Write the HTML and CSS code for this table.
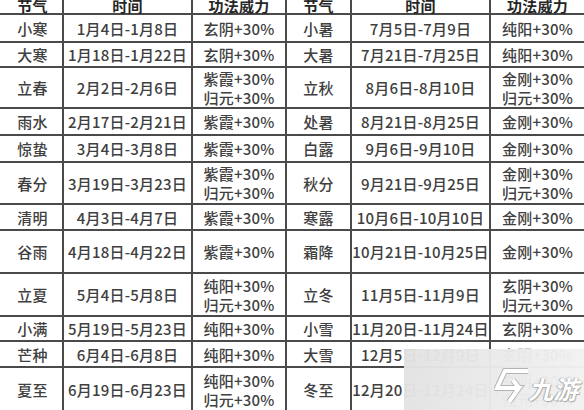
FILE: index.html
```html
<!DOCTYPE html>
<html lang="zh-CN">
<head>
<meta charset="utf-8">
<title>节气功法威力</title>
<link rel="stylesheet" href="styles.css">
</head>
<body>
<div class="page">
  <div class="table">
    <div class="c h first">节气</div><div class="c h">时间</div><div class="c h">功法威力</div><div class="c h">节气</div><div class="c h">时间</div><div class="c h">功法威力</div>

    <div class="c first">小寒</div><div class="c">1月4日-1月8日</div><div class="c">玄阴+30%</div><div class="c">小暑</div><div class="c">7月5日-7月9日</div><div class="c">纯阳+30%</div>

    <div class="c first">大寒</div><div class="c">1月18日-1月22日</div><div class="c">玄阴+30%</div><div class="c">大暑</div><div class="c">7月21日-7月25日</div><div class="c">纯阳+30%</div>

    <div class="c first">立春</div><div class="c">2月2日-2月6日</div><div class="c"><span>紫霞+30%</span><span>归元+30%</span></div><div class="c">立秋</div><div class="c">8月6日-8月10日</div><div class="c"><span>金刚+30%</span><span>归元+30%</span></div>

    <div class="c first">雨水</div><div class="c">2月17日-2月21日</div><div class="c">紫霞+30%</div><div class="c">处暑</div><div class="c">8月21日-8月25日</div><div class="c">金刚+30%</div>

    <div class="c first">惊蛰</div><div class="c">3月4日-3月8日</div><div class="c">紫霞+30%</div><div class="c">白露</div><div class="c">9月6日-9月10日</div><div class="c">金刚+30%</div>

    <div class="c first">春分</div><div class="c">3月19日-3月23日</div><div class="c"><span>紫霞+30%</span><span>归元+30%</span></div><div class="c">秋分</div><div class="c">9月21日-9月25日</div><div class="c"><span>金刚+30%</span><span>归元+30%</span></div>

    <div class="c first">清明</div><div class="c">4月3日-4月7日</div><div class="c">紫霞+30%</div><div class="c">寒露</div><div class="c">10月6日-10月10日</div><div class="c">金刚+30%</div>

    <div class="c first">谷雨</div><div class="c">4月18日-4月22日</div><div class="c">紫霞+30%</div><div class="c">霜降</div><div class="c">10月21日-10月25日</div><div class="c">金刚+30%</div>

    <div class="c first">立夏</div><div class="c">5月4日-5月8日</div><div class="c"><span>纯阳+30%</span><span>归元+30%</span></div><div class="c">立冬</div><div class="c">11月5日-11月9日</div><div class="c"><span>玄阴+30%</span><span>归元+30%</span></div>

    <div class="c first">小满</div><div class="c">5月19日-5月23日</div><div class="c">纯阳+30%</div><div class="c">小雪</div><div class="c">11月20日-11月24日</div><div class="c">玄阴+30%</div>

    <div class="c first">芒种</div><div class="c">6月4日-6月8日</div><div class="c">纯阳+30%</div><div class="c">大雪</div><div class="c">12月5日-12月9日</div><div class="c">玄阴+30%</div>

    <div class="c first">夏至</div><div class="c">6月19日-6月23日</div><div class="c"><span>纯阳+30%</span><span>归元+30%</span></div><div class="c">冬至</div><div class="c">12月20日-12月24日</div><div class="c"><span>玄阴+30%</span><span>归元+30%</span></div>
  </div>

  <div class="watermark">
    <svg class="wm-logo" width="40" height="40" viewBox="0 0 40 40">
      <polyline class="wm-shadow" points="34,4 11,4 3,21 25,21 15,35"/>
      <polyline class="wm-shadow" points="19,13 25,21"/>
      <polyline class="wm-line" points="34,4 11,4 3,21 25,21 15,35"/>
      <polyline class="wm-line" points="19,13 25,21"/>
    </svg>
    <span class="wm-text">九游</span>
  </div>
</div>
</body>
</html>
```

FILE: styles.css
```css
html, body {
  margin: 0;
  padding: 0;
  background: #ffffff;
  overflow: hidden;
}

.page {
  position: relative;
  width: 584px;
  height: 410px;
  overflow: hidden;
}

.table {
  display: grid;
  grid-template-columns: 65px 127px 92px 63px 137px 93px;
  grid-template-rows: 16px 26px 23px 39px 25px 25px 40px 24px 41px 41px 23px 24px 43px;
  gap: 2px;
  background: #4a4a4a;
  margin: -3px 0 0 -3px;
  width: 587px;
  font-family: "Noto Sans CJK SC", "Noto Sans", sans-serif;
  font-size: 15px;
  font-weight: 500;
  color: #404040;
}

.c {
  background: #ffffff;
  display: flex;
  flex-direction: column;
  align-items: center;
  justify-content: center;
  line-height: 19px;
  white-space: nowrap;
  letter-spacing: 0.2px;
}

.c.first {
  padding-left: 6px;
}

.c.h {
  font-weight: 700;
  color: #262626;
}

.watermark {
  position: absolute;
  left: 404px;
  top: 349px;
  right: 0;
  bottom: 0;
  background: linear-gradient(100deg, rgba(226, 226, 226, 0.97) 0%, rgba(236, 236, 236, 0.97) 60%, rgba(242, 242, 242, 0.97) 100%);
}

.wm-logo {
  position: absolute;
  left: 90px;
  top: 18px;
}

.wm-shadow {
  fill: none;
  stroke: #b4b4b4;
  stroke-width: 6;
  stroke-linejoin: miter;
}

.wm-line {
  fill: none;
  stroke: #ffffff;
  stroke-width: 4;
  stroke-linejoin: miter;
}

.wm-text {
  position: absolute;
  left: 127px;
  top: 24px;
  font-family: "Noto Sans CJK SC", sans-serif;
  font-size: 25px;
  line-height: 30px;
  font-weight: 700;
  color: #ffffff;
  transform: skewX(-14deg);
  text-shadow: 0 0 1px #9a9a9a, 1px 1px 1px #a8a8a8, -1px 0 1px #b0b0b0;
}
```
